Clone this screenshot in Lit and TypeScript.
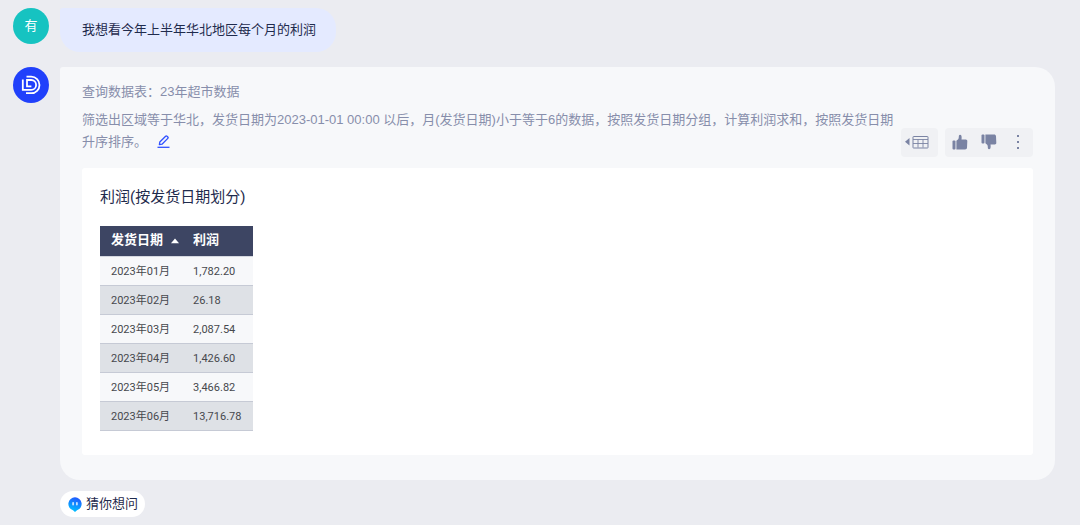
import { LitElement, html, css, svg } from "lit";
import { customElement } from "lit/decorators.js";

const rows: [string, string][] = [
  ["2023年01月", "1,782.20"],
  ["2023年02月", "26.18"],
  ["2023年03月", "2,087.54"],
  ["2023年04月", "1,426.60"],
  ["2023年05月", "3,466.82"],
  ["2023年06月", "13,716.78"],
];

const thumb = svg`
  <rect x="0.5" y="6.5" width="3" height="9" rx="1"></rect>
  <path d="M4.4 6.8 6.2 5.2C6.9 4.4 6.7 2.9 6.9 1.7 7.1.6 8.8.5 9.3 1.6c.5 1.3.4 2.8.2 4h4.3c1 0 1.6.8 1.5 1.7l-.3 6.5c-.1 1.1-.9 1.7-1.9 1.7H4.4z"></path>
`;

@customElement("result-table")
export class ResultTable extends LitElement {
  static styles = css`
    :host { display: block; }
    .table {
      border-collapse: separate;
      border-spacing: 0;
      font-family: Roboto, "Noto Sans CJK SC", sans-serif;
      font-size: 11px;
      color: #46484d;
    }
    .head, .cell {
      box-sizing: border-box;
      text-align: left;
      white-space: nowrap;
      padding: 0 12px 0 11px;
    }
    .head {
      height: 31px;
      padding-bottom: 2px;
      font-size: 13px;
      font-weight: 700;
      color: #fff;
      background: #3d4563;
      border-bottom: 1px solid #d5d8e0;
    }
    .cell {
      height: 29px;
      padding-top: 2px;
      background: #f7f8fa;
      border-bottom: 1px solid #c6cad5;
    }
    .row:nth-child(even) .cell { background: #dee1e6; }
    .head:first-child { padding-right: 2px; }
    .sort {
      display: inline-flex;
      align-items: center;
      gap: 8px;
      padding: 0;
      border: 0;
      background: none;
      color: inherit;
      font: inherit;
    }
    .arrow { display: block; fill: #fff; }
  `;

  render() {
    return html`
      <table class="table">
        <thead>
          <tr>
            <th class="head" scope="col" aria-sort="ascending">
              <button class="sort" type="button">发货日期
                <svg class="arrow" width="8" height="8" viewBox="0 0 8 8" aria-hidden="true"><path d="M0 7.2 4 2.4 8 7.2z"></path></svg>
              </button>
            </th>
            <th class="head" scope="col">利润</th>
          </tr>
        </thead>
        <tbody>
          ${rows.map(([month, profit]) => html`<tr class="row"><td class="cell">${month}</td><td class="cell">${profit}</td></tr>`)}
        </tbody>
      </table>
    `;
  }
}

@customElement("app-root")
export class AppRoot extends LitElement {
  static styles = css`
    :host {
      display: block;
      box-sizing: border-box;
      min-height: 100vh;
      padding: 8px 25px 8px 13px;
      background: #ebecf1;
      color: #1f2b4d;
      font-family: "Liberation Sans", "Noto Sans CJK SC", sans-serif;
      font-size: 13px;
      line-height: 22px;
    }
    .chat { display: flex; flex-direction: column; gap: 15px; }
    .message { display: flex; align-items: flex-start; gap: 11px; }
    .avatar {
      flex: none;
      display: grid;
      place-items: center;
      width: 36px;
      height: 36px;
      border-radius: 50%;
      background: #16c3c1;
      color: #fff;
    }
    .avatar.bot { background: #2040fb; }
    .bubble {
      padding: 11px 20px 11px 22px;
      border-radius: 3px 20px 20px 20px;
      background: #e4eaff;
    }
    .card {
      flex: 1;
      min-width: 0;
      padding: 14px 22px 25px;
      border-radius: 3px 20px 20px 20px;
      background: #f7f8fa;
    }
    .intro {
      display: flex;
      align-items: flex-end;
      color: #878eab;
    }
    .words { flex: 1; min-width: 0; }
    .line { margin: 0 0 6px; }
    .filter { margin: 0; }
    .tool {
      display: grid;
      place-items: center;
      padding: 0;
      border: 0;
      background: none;
      color: #7a83a3;
    }
    .tool svg, .edit svg, .hint svg, .avatar svg { display: block; }
    .edit {
      display: inline-block;
      vertical-align: middle;
      margin-left: 10px;
      padding: 0 0 2px;
      border: 0;
      background: none;
      color: #2f50ff;
    }
    .tools { display: flex; gap: 7px; margin-bottom: -4px; }
    .group {
      display: flex;
      align-items: center;
      justify-content: space-between;
      box-sizing: border-box;
      height: 29px;
      padding: 0 7px 2px;
      border-radius: 4px;
      background: #f0f1f4;
    }
    .group.view { width: 37px; padding: 0 4px 2px; }
    .group.rate { width: 88px; }
    .panel {
      margin-top: 15px;
      padding: 18px 18px 24px;
      border-radius: 3px;
      background: #fff;
    }
    .title {
      margin: 0 0 18px;
      font-family: Roboto, "Noto Sans CJK SC", sans-serif;
      font-size: 15px;
      font-weight: 400;
      line-height: 22px;
    }
    .hint {
      display: flex;
      align-items: center;
      gap: 4px;
      height: 26px;
      margin: 11px 0 0 47px;
      padding: 0 7px 0 8px;
      border: 0;
      border-radius: 13px;
      background: #fff;
      color: inherit;
      font: inherit;
    }
  `;

  render() {
    return html`
      <main class="chat">
        <section class="message">
          <div class="avatar">有</div>
          <div class="bubble">我想看今年上半年华北地区每个月的利润</div>
        </section>
        <section class="message">
          <div class="avatar bot">
            <svg width="20" height="20" viewBox="0 0 20 20" fill="none" stroke="#fff" stroke-width="1.8" aria-hidden="true">
              <path d="M5.5 1.6H10.2a8.2 8.2 0 0 1 0 16.6H5"></path>
              <path d="M1.8 4.5V14.8H10.2a4.9 4.9 0 0 0 0-9.8H6V11.4H10.4"></path>
            </svg>
          </div>
          <article class="card">
            <div class="intro">
              <div class="words">
                <p class="line">查询数据表：23年超市数据</p>
                <p class="filter">筛选出区域等于华北，发货日期为2023-01-01 00:00 以后，月(发货日期)小于等于6的数据，按照发货日期分组，计算利润求和，按照发货日期升序排序。<button class="edit" type="button" aria-label="编辑">
                  <svg width="13" height="13" viewBox="0 0 13 13" fill="none" stroke="currentColor" stroke-width="1.3" stroke-linejoin="round" aria-hidden="true">
                    <path d="M2.4 9.6 2.8 7 8.6 1.2a1 1 0 0 1 1.4 0l.8.8a1 1 0 0 1 0 1.4L5 9.2z"></path>
                    <path d="M.5 12.3H12.5"></path>
                  </svg></button></p>
              </div>
              <div class="tools">
                <div class="group view">
                  <button class="tool" type="button" aria-label="切换图表">
                    <svg width="27" height="14" viewBox="0 0 27 14" fill="none" stroke="currentColor" aria-hidden="true">
                      <path d="M4.5 3V10.4L0 6.7z" fill="currentColor" stroke="none"></path>
                      <rect x="8" y="1.5" width="15" height="11.5" rx="0.5"></rect>
                      <path d="M8 4.5h15M8 8.5h15M13 4.5v8M18 4.5v8" stroke-width="0.9"></path>
                    </svg>
                  </button>
                </div>
                <div class="group rate">
                  <button class="tool" type="button" aria-label="赞">
                    <svg width="16" height="16" viewBox="0 0 16 16" fill="currentColor" aria-hidden="true">${thumb}</svg>
                  </button>
                  <button class="tool" type="button" aria-label="踩">
                    <svg width="16" height="16" viewBox="0 0 16 16" fill="currentColor" aria-hidden="true"><g transform="matrix(1 0 0 -1 0 16)">${thumb}</g></svg>
                  </button>
                  <button class="tool" type="button" aria-label="更多">
                    <svg width="16" height="16" viewBox="0 0 16 16" fill="currentColor" aria-hidden="true"><path d="M7 1h2v2H7zM7 7h2v2H7zM7 13h2v2H7z"></path></svg>
                  </button>
                </div>
              </div>
            </div>
            <section class="panel">
              <h2 class="title">利润(按发货日期划分)</h2>
              <result-table></result-table>
            </section>
          </article>
        </section>
      </main>
      <button class="hint" type="button">
        <svg width="14" height="15" viewBox="0 0 14 15" aria-hidden="true">
          <defs>
            <linearGradient id="g" x1="0.7" y1="0" x2="0.4" y2="1">
              <stop offset="0" stop-color="#2256ff"></stop>
              <stop offset="1" stop-color="#00c2ff"></stop>
            </linearGradient>
          </defs>
          <path d="M7 .3a6.6 6.6 0 0 1 2 12.9L7 14.9 5 13.2A6.6 6.6 0 0 1 7 .3z" fill="url(#g)"></path>
          <rect x="4.3" y="5" width="1.6" height="3.6" rx="0.8" fill="#d8ecff"></rect>
          <rect x="8.1" y="5" width="1.6" height="3.6" rx="0.8" fill="#d8ecff"></rect>
        </svg>
        猜你想问
      </button>
    `;
  }
}
